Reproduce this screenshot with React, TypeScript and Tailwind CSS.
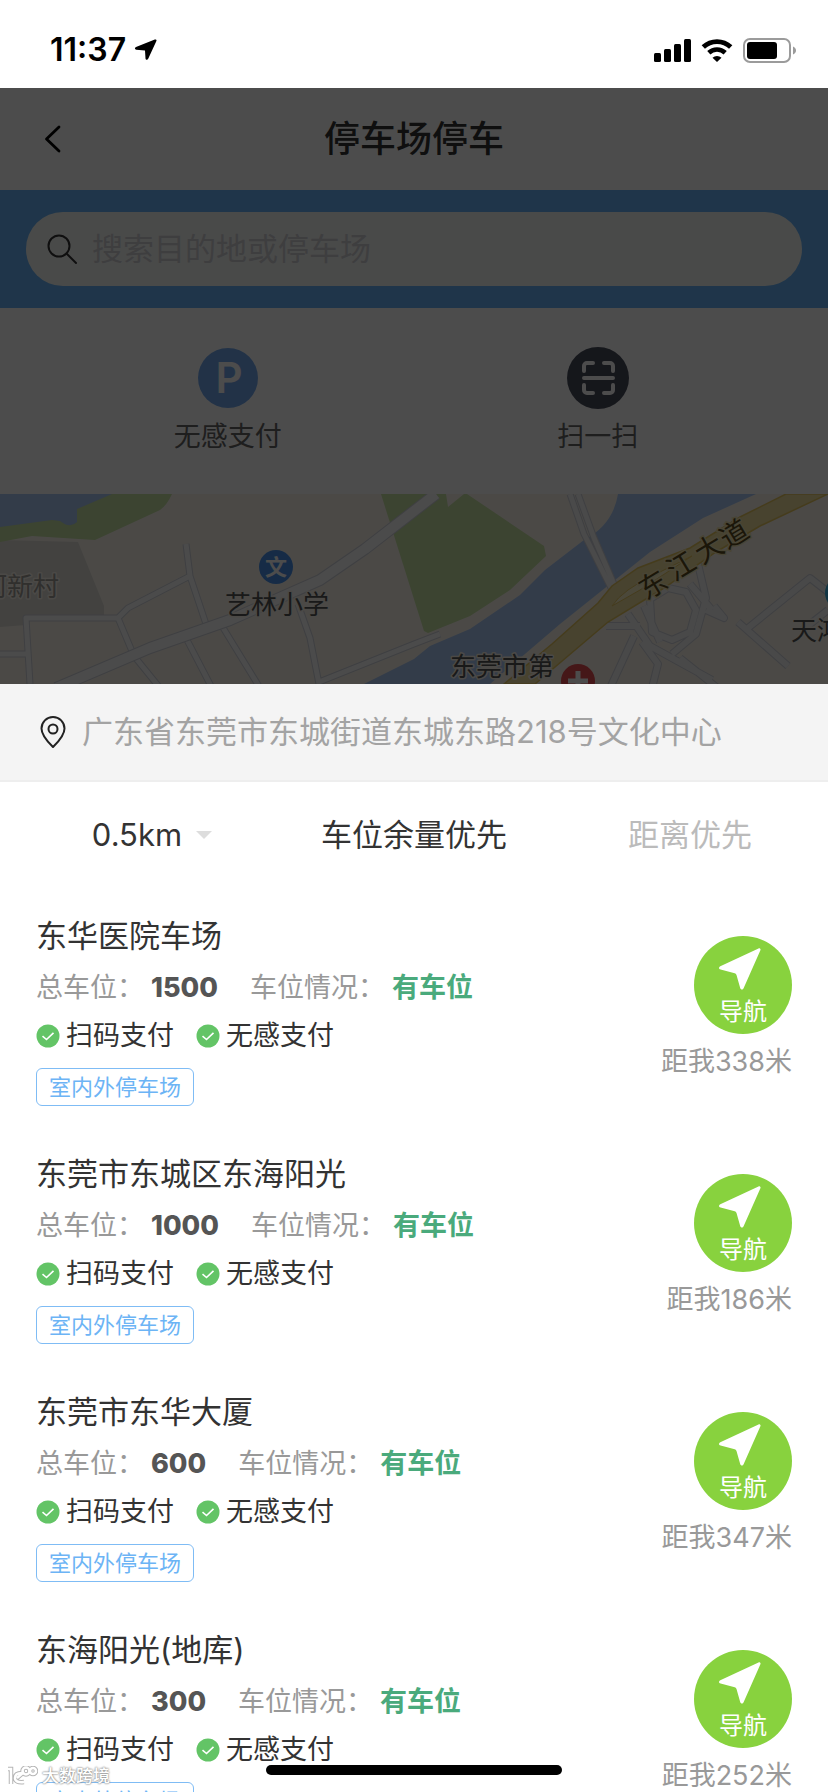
import type { ReactNode } from "react";

const lots = [
  { name: "东华医院车场", total: 1500, distance: 338 },
  { name: "东莞市东城区东海阳光", total: 1000, distance: 186 },
  { name: "东莞市东华大厦", total: 600, distance: 347 },
  { name: "东海阳光(地库)", total: 300, distance: 252 },
];

function StatusBar() {
  return (
    <div className="flex h-[88px] shrink-0 items-center justify-between bg-white pl-[50px] pr-8 pt-3">
      <div className="flex items-center gap-2">
        <span className="text-[32px] font-semibold leading-8 text-black">11:37</span>
        <svg className="h-[22px] w-[23px]" viewBox="0 0 23 22">
          <path d="M22.400 2 14.200 19.800c-.7 1.500-2.600 1.200-2.700-.4L11 11.600 2.300 10.800C.6 10.600.4 8.800 2 8.100L20.800.5C22 .1 22.900.9 22.400 2Z" />
        </svg>
      </div>
      <div className="flex items-center gap-2.5">
        <svg className="h-[23px] w-[37px]" viewBox="0 0 37 23">
          <rect x="0" y="14" width="7" height="9" rx="1.500" />
          <rect x="10" y="10" width="7" height="13" rx="1.500" />
          <rect x="20" y="5" width="7" height="18" rx="1.500" />
          <rect x="30" y="0" width="7" height="23" rx="1.500" />
        </svg>
        <svg className="h-[24px] w-[32px]" viewBox="0 0 32 24">
          <path d="M2.300 9a20 20 0 0 1 27.400 0" fill="none" stroke="#000" strokeWidth="4.800" />
          <path d="M7.800 14.800a12 12 0 0 1 16.400 0" fill="none" stroke="#000" strokeWidth="4.600" />
          <path d="M16 24l-4.500-4.300a6.500 6.500 0 0 1 9 0Z" />
        </svg>
        <svg className="h-[25px] w-[53px]" viewBox="0 0 53 25">
          <rect x="1" y="1" width="46" height="23" rx="6" fill="none" stroke="#9b9b9b" strokeWidth="2" />
          <rect x="4" y="4" width="30" height="17" rx="3" />
          <path d="M50 8.500c4 1.500 4 6.500 0 8Z" fill="#9b9b9b" />
        </svg>
      </div>
    </div>
  );
}

const streets =
  "M186 50 190 82 206 130 M190 82 128 114 118 124 26 124 30 190 M0 160H27 M118 124 134 162 M134 162 160 194 M186 144 212 194 M222 132 260 194 M298 110 310 144 319 190 M319 188 414 150 440 140";
const avenue = "M56 194 150 154 230 126 320 86 365 55 436 0";
const bridge = "M570 0 584 40 612 96M578 0 594 44 620 104";
const interchange =
  "M628 120 650 152 712 186M606 132H640M644 112 660 148M650 105 668 94 686 98 696 116 690 138 672 146 652 138ZM698 70 706 104 696 140 672 160M690 90 712 116M706 116 724 124 714 112M634 142 610 194M642 148 658 170 652 194M680 164 720 196M738 128 788 172M748 134 810 84 828 98M800 138 828 116";

function RoadMap() {
  return (
    <svg
      className="block h-[190px] w-full"
      viewBox="0 0 828 190"
      preserveAspectRatio="xMidYMid slice"
      fontFamily='"Noto Sans CJK SC", sans-serif'
    >
      <rect width="828" height="190" fill="#faf5ec" />
      <path d="M0 46 78 48 104 112V122L26 124V131L0 133Z" fill="#e0ddd6" />
      <path d="M0 0H172Q167 11 160 16L95 46 32 42 0 48Z" fill="#c8e3a3" />
      <path d="M0 0H112L77 15V28Q70 35 60 27L52 26 0 33Z" fill="#aac8f5" />
      <path d="M381 0H467L544 52 546 62 510 96 470 122 428 139 424 137Z" fill="#c8e3a3" />
      <path d="M446 0 448 13 464 0Z" fill="#faf5ec" />
      <path
        d="M364 190 414 165 430 152 470 135 520 101 545 76 584 46Q613 31 618 0H756L703 24 650 58 560 130 490 190Z"
        fill="#aac8f5"
      />
      <g fill="none" strokeLinejoin="round">
        <path d={streets} stroke="#d2d4dc" strokeWidth="7" />
        <path d={streets} stroke="#fbfbfb" strokeWidth="5" />
        <path d={avenue} stroke="#d2d4dc" strokeWidth="12" />
        <path d={avenue} stroke="#fbfbfb" strokeWidth="10" />
        <path d={bridge} stroke="#d2d4dc" strokeWidth="7" />
        <path d={bridge} stroke="#f7f7f7" strokeWidth="5" />
        <path d={interchange} stroke="#d2d4dc" strokeWidth="8" />
        <path d={interchange} stroke="#f4f4f4" strokeWidth="6" />
      </g>
      <path
        d="M504 190 552 150 598 109 612 92 638 74 690 54 740 23 786 0H828L760 32 716 58 664 94 608 128 535 190Z"
        fill="#f0df9d"
        stroke="#e8c860"
        strokeWidth="1.500"
      />
      <path d="M612 112Q622 96 656 80L692 62 640 96Z" fill="#faf0c4" stroke="#e8c860" />
      <circle cx="276" cy="73" r="17" fill="#4a92ea" />
      <text x="276" y="81" fontSize="22" fontWeight="700" fill="#fff" textAnchor="middle">文</text>
      <g fontSize="26" stroke="#faf5ec" strokeWidth="3" paintOrder="stroke" strokeLinejoin="round">
        <text x="-19" y="102" fill="#a09d98">河新村</text>
        <text x="225" y="120" fill="#555">艺林小学</text>
        <text x="450" y="182" fill="#555">东莞市第</text>
        <text x="791" y="146" fill="#555">天鸿</text>
      </g>
      <g fontSize="28" fill="#5a4c20" stroke="#f3e6b3" strokeWidth="3" paintOrder="stroke" textAnchor="middle">
        <text transform="translate(653 91) rotate(-31)" y="10">东</text>
        <text transform="translate(681 72) rotate(-31)" y="10">江</text>
        <text transform="translate(709 55) rotate(-31)" y="10">大</text>
        <text transform="translate(734 40) rotate(-31)" y="10">道</text>
      </g>
      <circle cx="578" cy="187" r="17" fill="#e84e50" />
      <path d="M578 177V197M568 187H588" stroke="#fff" strokeWidth="5" />
      <circle cx="842" cy="99" r="17" fill="#3fb3e0" />
    </svg>
  );
}

function Shortcut({ label, children }: { label: string; children: ReactNode }) {
  return (
    <button type="button" className="flex flex-col items-center gap-2.5 text-[27px] leading-9 text-[#666]">
      <svg className="h-[62px] w-[62px]" viewBox="0 0 62 62">
        {children}
      </svg>
      {label}
    </button>
  );
}

function MapPage() {
  return (
    <div className="relative shrink-0 bg-white">
      <header className="grid h-[102px] grid-cols-[1fr_auto_1fr] items-center px-[44px]">
        <button type="button" aria-label="返回" className="w-fit">
          <svg className="h-[30px] w-5" viewBox="0 0 20 30" fill="none" stroke="#000" strokeWidth="2.800">
            <path d="M15 3 2.500 15 15 27" strokeLinecap="round" strokeLinejoin="round" />
          </svg>
        </button>
        <h1 className="text-[36px] font-medium leading-10 text-[#333]">停车场停车</h1>
      </header>

      <div className="bg-[#68b3f7] px-[26px] py-[22px]">
        <label className="flex h-[74px] items-center gap-3.5 rounded-full bg-[#f6f8f6] px-5">
          <svg className="h-8 w-8 shrink-0" viewBox="0 0 32 32" fill="none" stroke="#333" strokeWidth="2">
            <circle cx="13" cy="13" r="10.500" />
            <path d="M20.500 20.500 30 30" strokeLinecap="round" />
          </svg>
          <input
            type="text"
            aria-label="搜索"
            placeholder="搜索目的地或停车场"
            className="min-w-0 flex-1 bg-transparent text-[31px] leading-10 outline-none placeholder:text-[#cfcfd4]"
          />
        </label>
      </div>

      <div className="flex h-[186px] justify-around pl-9 pr-[52px] pt-[39px]">
        <Shortcut label="无感支付">
          <circle cx="31" cy="31" r="30" fill="#74a9ee" />
          <text x="32" y="46" fontSize="42" fontWeight="600" fill="#fff" textAnchor="middle">P</text>
        </Shortcut>
        <Shortcut label="扫一扫">
          <circle cx="31" cy="31" r="31" fill="#494d5d" />
          <path
            d="M17 24v-5a3 3 0 0 1 3-3h6M37 16h6a3 3 0 0 1 3 3v5M46 38v5a3 3 0 0 1-3 3h-6M26 46h-6a3 3 0 0 1-3-3v-5M17 31h29"
            fill="none"
            stroke="#fff"
            strokeWidth="4"
            strokeLinecap="round"
          />
        </Shortcut>
      </div>

      <RoadMap />
      <div className="absolute inset-0 bg-black/70" />
    </div>
  );
}

function PayMethod({ label }: { label: string }) {
  return (
    <li className="flex items-center gap-1.5">
      <svg className="h-6 w-6" viewBox="0 0 24 24">
        <circle cx="12" cy="12" r="11.500" fill="#63c466" />
        <path d="M6.500 12.200 10.500 15.500 17.500 8.800" fill="none" stroke="#fff" strokeWidth="1.600" />
      </svg>
      {label}
    </li>
  );
}

function LotRow({ lot }: { lot: (typeof lots)[number] }) {
  return (
    <li className="flex h-[238px] items-start justify-between">
      <div>
        <h2 className="text-[31px] leading-10 text-[#333]">{lot.name}</h2>
        <p className="mt-3 flex text-[27px] leading-10 text-[#999]">
          <span className="w-[115px]">总车位：</span>
          <b className="font-extrabold text-[#555]">{lot.total}</b>
          <span className="ml-8 w-[142px]">车位情况：</span>
          <b className="font-bold text-[#4aaa7c]">有车位</b>
        </p>
        <ul className="mt-2 flex gap-[22px] text-[27px] leading-10 text-[#333]">
          <PayMethod label="扫码支付" />
          <PayMethod label="无感支付" />
        </ul>
        <span className="mt-3 flex h-[38px] w-fit items-center rounded-md border border-[#7fbcf5] px-3 text-[22px] leading-8 text-[#6cb4f5]">
          室内外停车场
        </span>
      </div>
      <div className="flex flex-col items-end pt-5">
        <button
          type="button"
          className="flex h-[98px] w-[98px] flex-col items-center rounded-full bg-[#88d23e] pt-3 text-[24px] leading-9 text-white"
        >
          <svg className="mb-1 mr-1.5 h-[42px] w-[42px] shrink-0" viewBox="0 0 42 42" fill="#fff">
            <path d="M39.500.4C40.800-.2 42 .9 41.400 2.300L24.600 40.200c-.8 1.800-2.900 1.700-3.400-.2L17.500 27c-.3-1-.8-1.500-1.800-1.800L1.600 21.600c-2-.5-2.100-2.400-.3-3.300Z" />
          </svg>
          导航
        </button>
        <p className="mt-2 text-[27px] leading-10 text-[#999]">距我{lot.distance}米</p>
      </div>
    </li>
  );
}

function Watermark() {
  return (
    <div className="absolute bottom-1 left-2 flex items-center gap-1 text-[17px] font-medium leading-6 text-white [text-shadow:0_0_2px_#888,0_0_2px_#888]">
      <svg className="h-5 w-[30px]" viewBox="0 0 30 20" fill="none">
        <g stroke="#b5b5b5" strokeWidth="4.500">
          <path d="M0 3H3V18M14 7Q7 7 7 12T16 16M9 12 16 6" />
          <circle cx="18" cy="5" r="3.500" />
          <circle cx="25" cy="5" r="3" />
        </g>
        <g stroke="#fff" strokeWidth="2.500">
          <path d="M0 3H3V18M14 7Q7 7 7 12T16 16M9 12 16 6" />
          <circle cx="18" cy="5" r="3.500" />
          <circle cx="25" cy="5" r="3" />
        </g>
      </svg>
      大数跨境
    </div>
  );
}

export default function App() {
  return (
    <div className="relative flex h-screen flex-col overflow-hidden bg-white font-[Inter,'Noto_Sans_CJK_SC',sans-serif]">
      <StatusBar />
      <MapPage />

      <main className="min-h-0 flex-1 overflow-hidden bg-white">
        <div className="flex h-[98px] items-center gap-4 border-b-2 border-[#eee] bg-[#f4f4f4] pl-10">
          <svg className="h-8 w-[26px] shrink-0" viewBox="0 0 26 32" fill="none" stroke="#222" strokeWidth="2">
            <path d="M13 31C9 27 1.500 20 1.500 12.500a11.500 11.500 0 0 1 23 0C24.500 20 17 27 13 31Z" />
            <circle cx="13" cy="13" r="4.500" />
          </svg>
          <p className="truncate text-[31px] leading-10 text-[#a3a3a3]">广东省东莞市东城街道东城东路218号文化中心</p>
        </div>

        <div className="grid h-[106px] grid-cols-3 items-center text-[31px] leading-10 text-[#333]">
          <button type="button" className="flex items-center justify-center gap-3.5 pl-7">
            0.5km
            <svg className="h-2 w-4" viewBox="0 0 16 8">
              <path d="M0 0H16L8 8Z" fill="#ddd" />
            </svg>
          </button>
          <button type="button">车位余量优先</button>
          <button type="button" className="text-[#bbb]">距离优先</button>
        </div>

        <ul className="px-9 pt-7">
          {lots.map((lot) => (
            <LotRow key={lot.name} lot={lot} />
          ))}
        </ul>
      </main>

      <div className="absolute bottom-[17px] left-1/2 h-[10px] w-[296px] -translate-x-1/2 rounded-full bg-black" />
      <Watermark />
    </div>
  );
}
